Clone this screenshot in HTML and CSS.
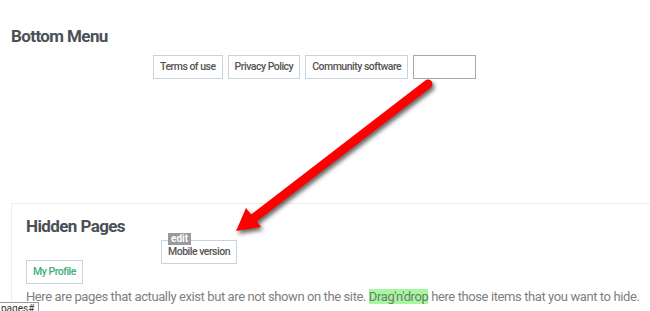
FILE: index.html
```html
<!DOCTYPE html>
<html lang="en">
<head>
  <meta charset="UTF-8" />
  <title>Menu Editor</title>
  <link rel="stylesheet" href="styles.css">
</head>
<body>
  <div class="menu-editor">
    <div class="section bottom-menu">
      <h2>Bottom Menu</h2>
      <div class="menu-items">
        <span class="menu-item">Terms of use</span>
        <span class="menu-item">Privacy Policy</span>
        <span class="menu-item">Community software</span>
        <span class="menu-item drop-slot"></span>
      </div>
    </div>

    <div class="section hidden-pages">
      <h2>Hidden Pages</h2>
      <div class="menu-items">
        <span class="menu-item green">My Profile</span>
      </div>
      <p class="hint">Here are pages that actually exist but are not shown on the site. <span class="mark">Drag'n'drop</span> here those items that you want to hide.</p>
    </div>
  </div>

  <!-- item being dragged -->
  <div class="dragging">
    <span class="edit-tag">edit</span>
    <span class="menu-item">Mobile version</span>
  </div>

  <svg class="arrow" width="650" height="311" viewBox="0 0 650 311">
    <line x1="428" y1="84" x2="250" y2="221" stroke="#ff0000" stroke-width="9" stroke-linecap="round" />
    <polygon points="236,231 246,208 261,227" fill="#ff0000" />
  </svg>

  <div class="status-tip">pages#</div>
</body>
</html>
```

FILE: styles.css
```css
body {
  margin: 0;
  padding: 0;
  font-family: Roboto, 'Liberation Sans', sans-serif;
  background: #fff;
  color: #555;
  overflow: hidden;
}

.menu-editor {
  padding-left: 11px;
}

.section h2 {
  margin: 0;
  font-size: 17px;
  line-height: 20px;
  font-weight: 700;
  letter-spacing: -0.6px;
  color: #4b5057;
}

.bottom-menu {
  padding-top: 26px;
  height: 177px;
}

.bottom-menu .menu-items {
  margin-top: 9px;
  padding-left: 142px;
}

.menu-items {
  display: flex;
  gap: 5px;
}

.menu-item {
  display: inline-block;
  height: 22px;
  line-height: 22px;
  padding: 0 6px;
  border: 1px solid #c6d4e1;
  font-size: 10.5px;
  font-weight: 500;
  letter-spacing: -0.5px;
  color: #555;
  background: #fff;
  white-space: nowrap;
}

.menu-item.drop-slot {
  width: 49px;
  border-color: #a8a8a8;
}

.menu-item.green {
  color: #3fae7d;
}

.hidden-pages {
  border: 1px solid #eee;
  border-right: none;
  padding: 12px 0 20px 14px;
}

.hidden-pages .menu-items {
  margin-top: 24px;
}

.hint {
  margin: 4px 0 0;
  font-size: 13px;
  line-height: 18px;
  letter-spacing: -0.4px;
  color: #808080;
  white-space: nowrap;
}

.mark {
  background: #a6f7a0;
  color: #6c7c6c;
}

.dragging {
  position: absolute;
  left: 161px;
  top: 233px;
}

.dragging .menu-item {
  margin-top: 7px;
}

.edit-tag {
  position: absolute;
  left: 7px;
  top: 0;
  background: #9a9a9a;
  color: #fff;
  font-size: 10px;
  font-weight: 700;
  line-height: 12px;
  padding: 0 3px;
  z-index: 1;
}

.arrow {
  position: absolute;
  left: 0;
  top: 0;
  filter: drop-shadow(2px 3px 2px rgba(0,0,0,0.6));
}

.status-tip {
  position: absolute;
  left: -4px;
  top: 302px;
  padding: 0 4px;
  border: 1px solid #999;
  background: #fff;
  font-size: 10px;
  line-height: 12px;
  color: #333;
}
```
